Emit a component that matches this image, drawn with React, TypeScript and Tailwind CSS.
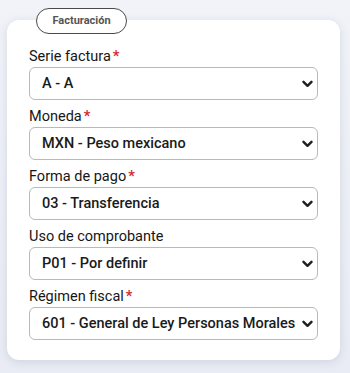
const fields = [
  { label: 'Serie factura', required: true, value: 'A - A' },
  { label: 'Moneda', required: true, value: 'MXN - Peso mexicano' },
  { label: 'Forma de pago', required: true, value: '03 - Transferencia' },
  { label: 'Uso de comprobante', required: false, value: 'P01 - Por definir' },
  { label: 'Régimen fiscal', required: true, value: '601 - General de Ley Personas Morales' },
];

function Chevron() {
  return (
    <svg width="11" height="8" viewBox="0 0 11 8" className="shrink-0">
      <path d="M1.5 1.8 L5.5 5.8 L9.5 1.8" fill="none" stroke="#1f1f1f" strokeWidth="2.4" strokeLinecap="round" strokeLinejoin="round" />
    </svg>
  );
}

export default function App() {
  return (
    <div className="w-[350px] h-[373px] bg-gradient-to-b from-[#f1f3f8] to-[#e9ecf4] pt-[20px] pl-[7px] font-['Roboto',sans-serif] overflow-hidden">
      <div className="relative w-[333px] h-[340px] rounded-[12px] bg-white shadow-[0_2px_10px_rgba(90,100,140,0.18)] pt-[27px] px-[22px]">
        <div className="absolute left-[29px] -top-[12px] h-[26px] w-[91px] rounded-full border-[1.5px] border-[#4a4a4a] bg-white flex items-center justify-center text-[11px] font-bold text-[#555]">
          Facturación
        </div>
        <div className="flex flex-col gap-[7px]">
          {fields.map((f) => (
            <div key={f.label} className="flex flex-col">
              <div className="h-[20px] leading-[20px] text-[14.5px] text-[#161616]">
                {f.label}
                {f.required && <span className="ml-[2px] text-[#d32f2f] font-bold">*</span>}
              </div>
              <div className="h-[33px] rounded-[6px] border border-[#b9b9b9] bg-white flex items-center pl-[12px] pr-[4px] gap-[4px]">
                <span className="flex-1 overflow-hidden whitespace-nowrap text-[14.5px] font-medium text-[#1a1a1a]">{f.value}</span>
                <Chevron />
              </div>
            </div>
          ))}
        </div>
      </div>
    </div>
  );
}
